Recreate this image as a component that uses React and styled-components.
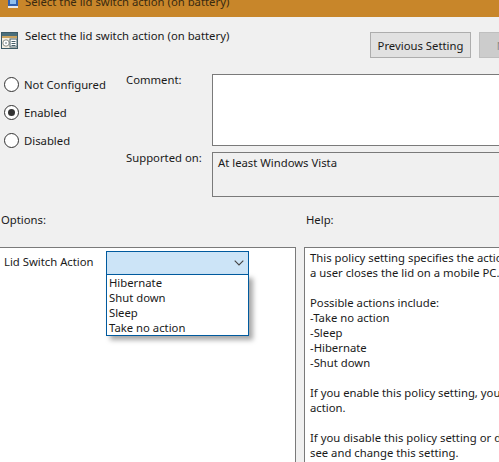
import styled, { createGlobalStyle } from "styled-components"

const GlobalStyle = createGlobalStyle`
  html, body {
    margin: 0;
    padding: 0;
    background: #f0f0f0;
  }
  body {
    font-family: "Noto Sans", "Open Sans", sans-serif;
    font-size: 11.3px;
    line-height: 15px;
    color: #1a1a1a;
  }
`

const radios = [
  { label: "Not Configured", checked: false },
  { label: "Enabled", checked: true },
  { label: "Disabled", checked: false },
]

const actions = ["Hibernate", "Shut down", "Sleep", "Take no action"]

const helpText = `This policy setting specifies the action that Windows takes when
a user closes the lid on a mobile PC.

Possible actions include:
-Take no action
-Sleep
-Hibernate
-Shut down

If you enable this policy setting, you must select the desired
action.

If you disable this policy setting or do not configure it, users can
see and change this setting.`

function WindowIcon() {
  return (
    <svg width="10" height="8" viewBox="0 0 10 8">
      <rect x="0" y="0" width="10" height="6" fill="#2f5fb0" />
      <rect x="2" y="0" width="6" height="4" fill="#8fc0ee" />
      <rect x="0" y="6" width="10" height="2" fill="#e8e8e8" />
    </svg>
  )
}

function PolicyIcon() {
  return (
    <svg width="17" height="17" viewBox="0 0 17 17">
      <rect x="0.5" y="0.5" width="16" height="16" fill="#f4efe2" stroke="#3c5a66" />
      <rect x="1" y="1" width="15" height="3" fill="#4a6f7c" />
      <rect x="1" y="4" width="15" height="2" fill="#c9a25e" />
      <circle cx="5" cy="11" r="3.2" fill="#fff" stroke="#8a8f8a" />
      <circle cx="5" cy="11" r="1" fill="#9aa6a8" />
      <rect x="9" y="7" width="7" height="8" fill="#fff" stroke="#47606a" />
      <path d="M10.5 9.5h4M10.5 11.5h4M10.5 13.5h4" stroke="#47606a" />
    </svg>
  )
}

function Chevron() {
  return (
    <svg width="10" height="6" viewBox="0 0 10 6">
      <path d="M0.7 0.7 L5 5 L9.3 0.7" fill="none" stroke="#444" strokeWidth="1.1" />
    </svg>
  )
}

export default function App() {
  return (
    <>
      <GlobalStyle />
      <Page>
        <TitleBar>
          <WindowIcon />
          <span>Select the lid switch action (on battery)</span>
        </TitleBar>

        <Header>
          <HeaderTitle>
            <PolicyIcon />
            <span>Select the lid switch action (on battery)</span>
          </HeaderTitle>
          <Buttons>
            <Button>Previous Setting</Button>
            <Button disabled>Next Setting</Button>
          </Buttons>
        </Header>

        <Settings>
          <RadioGroup>
            {radios.map((r) => (
              <RadioRow key={r.label}>
                <Radio $checked={r.checked} />
                <span>{r.label}</span>
              </RadioRow>
            ))}
          </RadioGroup>
          <Fields>
            <FieldLabel>Comment:</FieldLabel>
            <CommentBox />
            <FieldLabel>Supported on:</FieldLabel>
            <SupportedBox>At least Windows Vista</SupportedBox>
          </Fields>
        </Settings>

        <SectionLabels>
          <OptionsLabel>Options:</OptionsLabel>
          <span>Help:</span>
        </SectionLabels>

        <Panels>
          <OptionsPanel>
            <OptionName>Lid Switch Action</OptionName>
            <Combo>
              <ComboField>
                <Chevron />
              </ComboField>
              <DropList>
                {actions.map((a) => (
                  <DropItem key={a}>{a}</DropItem>
                ))}
              </DropList>
            </Combo>
          </OptionsPanel>
          <HelpPanel>{helpText}</HelpPanel>
        </Panels>
      </Page>
    </>
  )
}

const Page = styled.div`
  width: 499px;
  height: 462px;
  overflow: hidden;
  display: flex;
  flex-direction: column;
`
const TitleBar = styled.div`
  height: 17px;
  flex-shrink: 0;
  box-sizing: border-box;
  background: #c8862a;
  padding-left: 8px;
  display: flex;
  align-items: flex-start;
  gap: 7px;
  overflow: hidden;
  span {
    margin-top: -6px;
    color: #3a2a10;
  }
`
const Header = styled.header`
  height: 57px;
  flex-shrink: 0;
  box-sizing: border-box;
  padding: 15px 0 0 1px;
  display: flex;
  justify-content: space-between;
  overflow: hidden;
`
const HeaderTitle = styled.div`
  display: flex;
  align-items: flex-start;
  gap: 7px;
  span {
    margin-top: -4px;
  }
`
const Buttons = styled.div`
  display: flex;
  gap: 8px;
  margin-right: -81px;
`
const Button = styled.button`
  width: 101px;
  height: 26px;
  padding: 0;
  font: inherit;
  color: ${(props) => (props.disabled ? "#8a8a8a" : "#1a1a1a")};
  background: ${(props) => (props.disabled ? "#cccccc" : "#e1e1e1")};
  border: 1px solid ${(props) => (props.disabled ? "#bfbfbf" : "#adadad")};
`
const Settings = styled.section`
  display: flex;
  flex-shrink: 0;
`
const RadioGroup = styled.div`
  width: 126px;
  flex-shrink: 0;
  box-sizing: border-box;
  padding: 3px 0 0 4px;
  display: flex;
  flex-direction: column;
  gap: 13px;
`
const RadioRow = styled.div`
  display: flex;
  align-items: center;
  gap: 5px;
  height: 15px;
`
const Radio = styled.span`
  position: relative;
  width: 13px;
  height: 13px;
  border: 1px solid #333;
  border-radius: 50%;
  background: #fff;
  &::after {
    content: "";
    display: ${(props) => (props.$checked ? "block" : "none")};
    position: absolute;
    inset: 3px;
    border-radius: 50%;
    background: #333;
  }
`
const Fields = styled.div`
  flex-grow: 1;
  display: grid;
  grid-template-columns: 86px 1fr;
  grid-template-rows: 72px 45px;
  row-gap: 6px;
`
const FieldLabel = styled.div`
  margin-top: -2px;
`
const CommentBox = styled.div`
  box-sizing: border-box;
  background: #fff;
  border: 1px solid #7a7a7a;
  border-right: none;
`
const SupportedBox = styled.div`
  box-sizing: border-box;
  border: 1px solid #7a7a7a;
  border-right: none;
  padding: 2px 0 0 5px;
`
const SectionLabels = styled.div`
  display: flex;
  margin-top: 15px;
  height: 35px;
  padding-left: 1px;
  flex-shrink: 0;
`
const OptionsLabel = styled.span`
  width: 305px;
`
const Panels = styled.section`
  display: flex;
  gap: 8px;
  flex-grow: 1;
`
const OptionsPanel = styled.div`
  width: 296px;
  flex-shrink: 0;
  box-sizing: border-box;
  background: #fff;
  border: 1px solid #7a7a7a;
  border-left: none;
  border-bottom: none;
  padding: 3px 0 0 4px;
  display: flex;
`
const OptionName = styled.span`
  width: 102px;
  flex-shrink: 0;
  white-space: nowrap;
  margin-top: 3px;
`
const Combo = styled.div`
  position: relative;
  width: 143px;
`
const ComboField = styled.div`
  box-sizing: border-box;
  height: 24px;
  background: #cce4f7;
  border: 1px solid #005a9e;
  display: flex;
  align-items: center;
  justify-content: flex-end;
  padding-right: 4px;
`
const DropList = styled.ul`
  position: absolute;
  top: 23px;
  left: 0;
  right: 0;
  margin: 0;
  padding: 0 2px;
  list-style: none;
  background: #fff;
  border: 1px solid #005a9e;
  box-shadow: 4px 4px 5px rgba(0, 0, 0, 0.35);
`
const DropItem = styled.li`
  height: 15px;
  line-height: 15px;
`
const HelpPanel = styled.div`
  flex-grow: 1;
  box-sizing: border-box;
  background: #fff;
  border: 1px solid #7a7a7a;
  border-right: none;
  border-bottom: none;
  padding: 2px 0 0 5px;
  white-space: pre;
  overflow: hidden;
`
